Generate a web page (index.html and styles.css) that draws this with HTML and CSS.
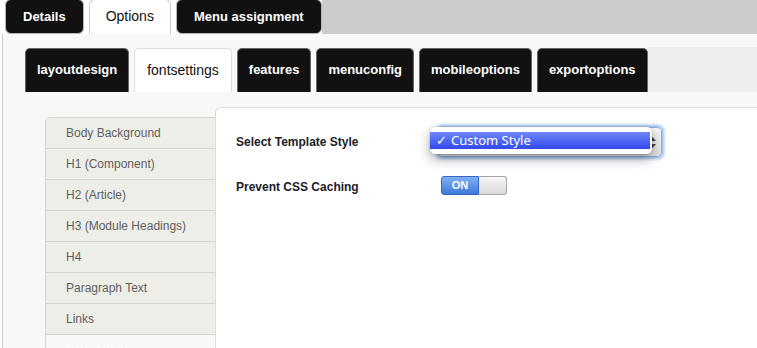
FILE: index.html
```html
<!DOCTYPE html>
<html lang="en">
<head>
  <meta charset="UTF-8" />
  <title>Template settings</title>
  <link rel="stylesheet" href="styles.css">
</head>
<body>

  <!-- Main tabs -->
  <nav class="main-tabs">
    <a href="#" class="main-tab">Details</a>
    <a href="#" class="main-tab active">Options</a>
    <a href="#" class="main-tab">Menu assignment</a>
    <div class="tab-fill"></div>
  </nav>

  <div class="page">

    <!-- Option groups -->
    <nav class="sub-tabs">
      <a href="#" class="sub-tab">layoutdesign</a>
      <a href="#" class="sub-tab active">fontsettings</a>
      <a href="#" class="sub-tab">features</a>
      <a href="#" class="sub-tab">menuconfig</a>
      <a href="#" class="sub-tab">mobileoptions</a>
      <a href="#" class="sub-tab">exportoptions</a>
      <div class="sub-fill"></div>
    </nav>

    <div class="settings">
      <ul class="side-menu">
        <li>Body Background</li>
        <li>H1 (Component)</li>
        <li>H2 (Article)</li>
        <li>H3 (Module Headings)</li>
        <li>H4</li>
        <li>Paragraph Text</li>
        <li>Links</li>
        <li class="muted">Select Style</li>
      </ul>

      <section class="panel">
        <div class="field">
          <label class="field-label">Select Template Style</label>
          <div class="select">
            <svg class="select-arrows" width="7" height="11" viewBox="0 0 7 11">
              <path d="M3.5 0 L7 4 L0 4 Z M3.5 11 L7 7 L0 7 Z" fill="#444" />
            </svg>
            <div class="select-popup">
              <div class="select-option"><span class="check">✓</span>Custom Style</div>
            </div>
          </div>
        </div>

        <div class="field">
          <label class="field-label">Prevent CSS Caching</label>
          <div class="toggle">
            <span class="toggle-on">ON</span>
            <span class="toggle-off"></span>
          </div>
        </div>
      </section>
    </div>

  </div>

</body>
</html>
```

FILE: styles.css
```css
body {
  margin: 0;
  font-family: "Liberation Sans", Arial, sans-serif;
  background-color: #fff;
  overflow: hidden;
}

/* Main tabs */
.main-tabs {
  display: flex;
  gap: 5px;
  height: 34px;
  padding-left: 5px;
  overflow: hidden;
}

.main-tab {
  box-sizing: border-box;
  height: 35px;
  margin-top: -1px;
  padding: 0 17px;
  line-height: 33px;
  background-color: #111;
  color: #fff;
  font-size: 13px;
  font-weight: bold;
  text-decoration: none;
  border: 1px solid #b5b5b5;
  border-radius: 6px;
}

.main-tab.active {
  padding: 0 16px;
  background-color: #fff;
  color: #111;
  font-size: 14px;
  font-weight: normal;
  border-color: #ccc;
  border-bottom: none;
  border-radius: 6px 6px 0 0;
}

.tab-fill {
  flex: 1;
  margin-left: -5px;
  background-color: #ccc;
}

/* Page body */
.page {
  margin-left: 2px;
  padding-top: 14px;
  min-height: 400px;
  background-color: #f8f8f8;
  border-left: 1px solid #ccc;
}

.sub-tabs {
  display: flex;
  gap: 5px;
  height: 44px;
  padding-left: 22px;
}

.sub-tab {
  box-sizing: border-box;
  height: 44px;
  padding: 0 11px;
  line-height: 42px;
  background-color: #111;
  color: #fff;
  font-size: 13px;
  font-weight: bold;
  text-decoration: none;
  border: 1px solid #666;
  border-bottom: none;
  border-radius: 5px 5px 0 0;
}

.sub-tab.active {
  padding: 0 12px;
  background-color: #fff;
  color: #111;
  font-size: 14px;
  font-weight: normal;
  border-color: #ddd;
}

.sub-fill {
  flex: 1;
  margin-left: -5px;
  margin-top: -1px;
  background-color: #eee;
}

/* Settings */
.settings {
  display: flex;
  margin-top: 15px;
}

.side-menu {
  box-sizing: border-box;
  width: 170px;
  margin: 10px 0 0 42px;
  padding: 0;
  list-style: none;
  border-left: 1px solid #d6d6d0;
  border-top: 1px solid #d6d6d0;
  border-top-left-radius: 5px;
  overflow: hidden;
}

.side-menu li {
  height: 30px;
  line-height: 30px;
  padding-left: 20px;
  background-color: #eeeee9;
  color: #5e5e5e;
  font-size: 12px;
  border-bottom: 1px solid #d6d6d0;
}

.side-menu li.muted {
  background-color: #f8f8f8;
  color: #fff;
}

.panel {
  flex: 1;
  min-height: 300px;
  padding: 19px 0 0 20px;
  background-color: #fff;
  border: 1px solid #ddd;
  border-right: none;
  border-bottom: none;
  border-top-left-radius: 6px;
}

.field {
  display: flex;
  align-items: center;
}

.field + .field {
  margin-top: 19px;
}

.field + .field .field-label {
  padding-top: 3px;
}

.field-label {
  width: 202px;
  flex-shrink: 0;
  font-size: 12px;
  font-weight: bold;
  color: #1c1c28;
}

/* Select (open) */
.select {
  position: relative;
  box-sizing: border-box;
  width: 224px;
  height: 30px;
  background: linear-gradient(#f6f6f6, #e0e0e0);
  border: 1px solid #8fb0de;
  border-radius: 4px;
  box-shadow: 0 0 3px 2px rgba(90, 150, 230, 0.6);
}

.select-arrows {
  position: absolute;
  right: 5px;
  top: 9px;
}

.select-popup {
  position: absolute;
  left: -9px;
  top: -1px;
  box-sizing: border-box;
  width: 222px;
  height: 27px;
  padding: 5px 2px 5px 0;
  background-color: #fff;
  border-radius: 5px;
  box-shadow: 0 5px 12px rgba(0, 0, 0, 0.35), 0 0 0 1px rgba(0, 0, 0, 0.08);
}

.select-option {
  height: 17px;
  line-height: 17px;
  padding-left: 6px;
  background: linear-gradient(#6d88f7, #3247ef);
  color: #fff;
  font-family: "Noto Sans", "DejaVu Sans", sans-serif;
  font-size: 13px;
}

.check {
  display: inline-block;
  width: 15px;
  font-weight: bold;
}

/* Toggle */
.toggle {
  display: flex;
  height: 19px;
  margin-left: 3px;
}

.toggle-on {
  box-sizing: border-box;
  width: 38px;
  line-height: 17px;
  text-align: center;
  background: linear-gradient(#80b0f2, #3d7ada);
  color: #fff;
  font-size: 11px;
  font-weight: bold;
  border: 1px solid #3567c2;
  border-radius: 3px 0 0 3px;
}

.toggle-off {
  box-sizing: border-box;
  width: 28px;
  background: linear-gradient(#f6f6f6, #d9d9d9);
  border: 1px solid #a8a8a8;
  border-left: none;
  border-radius: 0 3px 3px 0;
}
```
